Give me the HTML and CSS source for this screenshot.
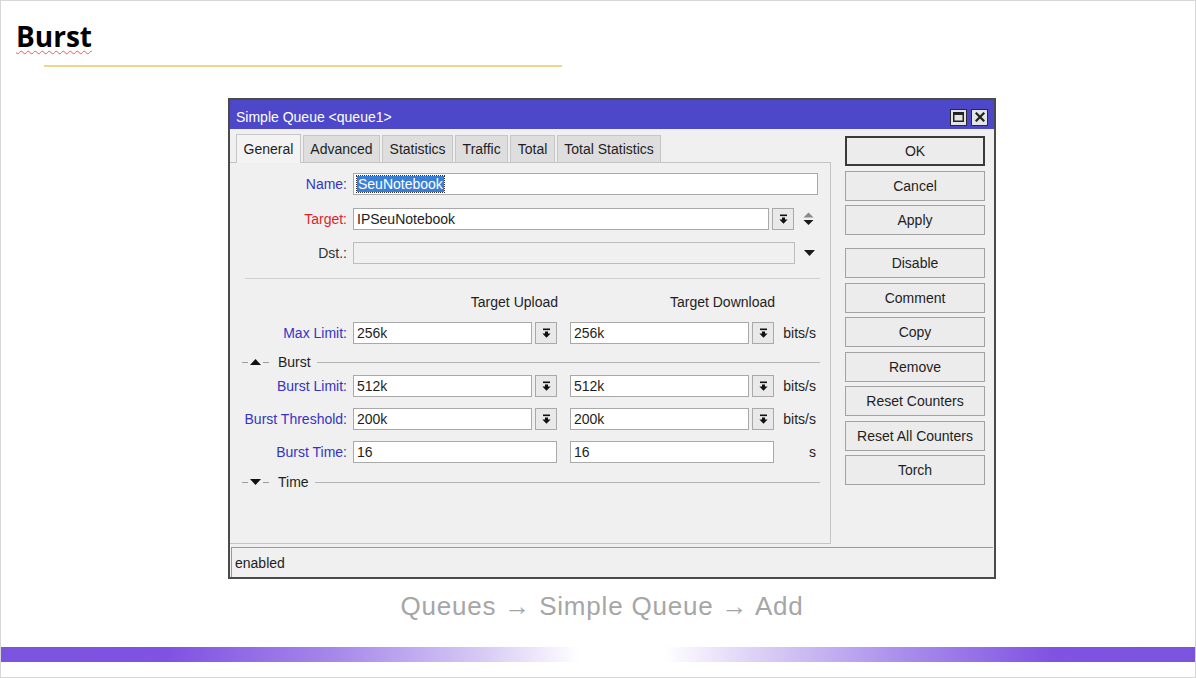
FILE: index.html
```html
<!DOCTYPE html>
<html lang="pt">
<head>
<meta charset="utf-8">
<title>Burst</title>
<link rel="stylesheet" href="styles.css">
</head>
<body>
<div class="slide">
  <h1 class="title"><span class="sq">Burst</span></h1>
  <div class="rule"></div>

  <div class="win">
    <div class="titlebar">
      <span class="wtitle">Simple Queue &lt;queue1&gt;</span>
      <div class="wbtns">
        <span class="wbtn"><svg width="11" height="10" viewBox="0 0 11 10"><rect x="0.75" y="0.75" width="9.5" height="8.5" fill="none" stroke="#222" stroke-width="1.5"/><rect x="0.75" y="0.75" width="9.5" height="2.2" fill="#222"/></svg></span>
        <span class="wbtn"><svg width="10" height="10" viewBox="0 0 10 10"><path d="M1.5 1.5l7 7M8.5 1.5l-7 7" stroke="#222" stroke-width="2.2" stroke-linecap="square"/></svg></span>
      </div>
    </div>

    <div class="wbody">
      <div class="leftcol">
        <div class="tabs">
          <span class="tab active">General</span>
          <span class="tab">Advanced</span>
          <span class="tab">Statistics</span>
          <span class="tab">Traffic</span>
          <span class="tab">Total</span>
          <span class="tab">Total Statistics</span>
        </div>

        <div class="panel">
          <div class="row r-name">
            <span class="lbl blue">Name:</span>
            <span class="inp w-name"><span class="sel">SeuNotebook</span></span>
          </div>
          <div class="row r-target">
            <span class="lbl red">Target:</span>
            <span class="inp w-target">IPSeuNotebook</span>
            <span class="dd"><svg class="ddi" width="9" height="10" viewBox="0 0 9 10"><rect x="1" y="0.5" width="7" height="1.6"/><path d="M3 3.4h3v2h2.6L4.5 9.8 0.4 5.4H3z"/></svg></span>
            <svg class="updown" width="11" height="14" viewBox="0 0 11 14"><path d="M5.5 0.5L10.5 5.5H0.5z" fill="#8a8a8a"/><path d="M0.5 8H10.5L5.5 13z" fill="#1a1a1a"/></svg>
          </div>
          <div class="row r-dst">
            <span class="lbl grey">Dst.:</span>
            <span class="inp w-dst disabled"></span>
            <svg class="tri-dst" width="11" height="6" viewBox="0 0 11 6"><path d="M0 0H11L5.5 6z" fill="#1a1a1a"/></svg>
          </div>

          <div class="sep"></div>

          <div class="hdr">
            <span class="hcell">Target Upload</span>
            <span class="hcell second">Target Download</span>
          </div>

          <div class="row r-max">
            <span class="lbl blue">Max Limit:</span>
            <span class="inp w-lim">256k</span>
            <span class="dd"><svg class="ddi" width="9" height="10" viewBox="0 0 9 10"><rect x="1" y="0.5" width="7" height="1.6"/><path d="M3 3.4h3v2h2.6L4.5 9.8 0.4 5.4H3z"/></svg></span>
            <span class="inp w-lim second">256k</span>
            <span class="dd"><svg class="ddi" width="9" height="10" viewBox="0 0 9 10"><rect x="1" y="0.5" width="7" height="1.6"/><path d="M3 3.4h3v2h2.6L4.5 9.8 0.4 5.4H3z"/></svg></span>
            <span class="unit">bits/s</span>
          </div>

          <div class="grp g-burst">
            <span class="dash"></span>
            <svg class="gtri" width="11" height="6" viewBox="0 0 11 6"><path d="M5.5 0L11 6H0z" fill="#111"/></svg>
            <span class="dash"></span>
            <span class="gtext">Burst</span>
            <span class="gline"></span>
          </div>

          <div class="row r-blim">
            <span class="lbl blue">Burst Limit:</span>
            <span class="inp w-lim">512k</span>
            <span class="dd"><svg class="ddi" width="9" height="10" viewBox="0 0 9 10"><rect x="1" y="0.5" width="7" height="1.6"/><path d="M3 3.4h3v2h2.6L4.5 9.8 0.4 5.4H3z"/></svg></span>
            <span class="inp w-lim second">512k</span>
            <span class="dd"><svg class="ddi" width="9" height="10" viewBox="0 0 9 10"><rect x="1" y="0.5" width="7" height="1.6"/><path d="M3 3.4h3v2h2.6L4.5 9.8 0.4 5.4H3z"/></svg></span>
            <span class="unit">bits/s</span>
          </div>

          <div class="row r-bthr">
            <span class="lbl blue">Burst Threshold:</span>
            <span class="inp w-lim">200k</span>
            <span class="dd"><svg class="ddi" width="9" height="10" viewBox="0 0 9 10"><rect x="1" y="0.5" width="7" height="1.6"/><path d="M3 3.4h3v2h2.6L4.5 9.8 0.4 5.4H3z"/></svg></span>
            <span class="inp w-lim second">200k</span>
            <span class="dd"><svg class="ddi" width="9" height="10" viewBox="0 0 9 10"><rect x="1" y="0.5" width="7" height="1.6"/><path d="M3 3.4h3v2h2.6L4.5 9.8 0.4 5.4H3z"/></svg></span>
            <span class="unit">bits/s</span>
          </div>

          <div class="row r-btime">
            <span class="lbl blue">Burst Time:</span>
            <span class="inp w-time">16</span>
            <span class="inp w-time second">16</span>
            <span class="unit">s</span>
          </div>

          <div class="grp g-time">
            <span class="dash"></span>
            <svg class="gtri" width="11" height="6" viewBox="0 0 11 6"><path d="M0 0H11L5.5 6z" fill="#111"/></svg>
            <span class="dash"></span>
            <span class="gtext">Time</span>
            <span class="gline"></span>
          </div>
        </div>
      </div>

      <div class="btncol">
        <button class="btn default">OK</button>
        <button class="btn">Cancel</button>
        <button class="btn">Apply</button>
        <button class="btn b-gap">Disable</button>
        <button class="btn">Comment</button>
        <button class="btn">Copy</button>
        <button class="btn">Remove</button>
        <button class="btn">Reset Counters</button>
        <button class="btn">Reset All Counters</button>
        <button class="btn">Torch</button>
      </div>
    </div>

    <div class="status">enabled</div>
  </div>

  <p class="caption">Queues → Simple Queue → Add</p>
  <div class="band"></div>
</div>
</body>
</html>
```

FILE: styles.css
```css
html, body {
  margin: 0;
  padding: 0;
  background: #fff;
}

.slide {
  width: 1196px;
  height: 678px;
  box-sizing: border-box;
  border: 1px solid #d6d6d6;
  display: flex;
  flex-direction: column;
  overflow: hidden;
  background: #fff;
}

.title {
  margin: 0;
  padding: 18px 0 0 15px;
  font: 700 28px/34px "Open Sans", "Liberation Sans", sans-serif;
  color: #000;
}

.sq {
  text-decoration: underline wavy #e06060;
  text-decoration-thickness: 1px;
  text-underline-offset: 3px;
}

.rule {
  margin: 12px 0 0 43px;
  width: 518px;
  height: 2px;
  background: #ecd78f;
}

/* ---------- window ---------- */
.win {
  margin: 31px 0 0 227px;
  width: 768px;
  height: 481px;
  box-sizing: border-box;
  border: 2px solid #4a4a4a;
  background: #f0f0f0;
  display: flex;
  flex-direction: column;
  font: 14px "Liberation Sans", Arial, sans-serif;
  color: #1e1e1e;
}

.titlebar {
  height: 29px;
  box-sizing: border-box;
  padding: 5px 6px 0;
  flex: none;
  background: #4c48c9;
  display: flex;
  align-items: center;
  color: #fff;
}

.wtitle { flex: 1; }

.wbtns {
  display: flex;
  gap: 4px;
}

.wbtn {
  width: 17px;
  height: 17px;
  box-sizing: border-box;
  border: 1px solid #2a2a2a;
  background: #e4e4e4;
  display: flex;
  align-items: center;
  justify-content: center;
}

.wbody {
  display: flex;
  height: 415px;
  flex: none;
}

.leftcol {
  width: 601px;
  display: flex;
  flex-direction: column;
}

/* tabs */
.tabs {
  margin-top: 5px;
  height: 29px;
  padding-left: 6px;
  display: flex;
  align-items: flex-end;
  gap: 2px;
  box-shadow: inset 0 -1px 0 #c4c4c4;
}

.tab {
  height: 27px;
  margin-bottom: 1px;
  box-sizing: border-box;
  padding: 0 6.5px;
  border: 1px solid #c6c6c6;
  border-bottom: none;
  background: #dedede;
  display: flex;
  align-items: center;
}

.tab.active {
  height: 29px;
  margin-bottom: 0;
  background: #f3f3f3;
}

.panel {
  flex: 1;
  border-right: 1px solid #c4c4c4;
  border-bottom: 1px solid #c4c4c4;
}

/* form rows */
.row {
  display: flex;
  align-items: center;
  height: 22px;
}

.r-name { margin-top: 10px; }
.r-target { margin-top: 13px; }
.r-dst { margin-top: 12px; }
.r-max { margin-top: 12px; }
.r-blim { margin-top: 6px; }
.r-bthr { margin-top: 11px; }
.r-btime { margin-top: 11px; }

.lbl {
  width: 117px;
  margin-right: 6px;
  flex: none;
  text-align: right;
  white-space: nowrap;
}

.blue { color: #3434c4; }
.red { color: #e01f2b; }
.grey { color: #333; }

.inp {
  height: 22px;
  box-sizing: border-box;
  border: 1px solid #a9a9a9;
  background: #fff;
  padding-left: 3px;
  display: flex;
  align-items: center;
  flex: none;
  white-space: nowrap;
}

.inp.disabled {
  background: #f0f0f0;
  border-color: #bdbdbd;
}

.w-name { width: 465px; }
.w-target { width: 416px; }
.w-dst { width: 442px; }
.w-lim { width: 179px; }
.w-time { width: 204px; }

.second { margin-left: 13px; }

.sel {
  background: #3a7fd6;
  color: #fff;
  padding: 0 1px;
  outline: 1px dotted #333;
}

.dd {
  width: 22px;
  height: 22px;
  margin-left: 3px;
  box-sizing: border-box;
  border: 1px solid #a9a9a9;
  background: #e9e9e9;
  display: flex;
  align-items: center;
  justify-content: center;
  flex: none;
}

.ddi { fill: #111; }

.updown { margin-left: 9px; flex: none; }
.tri-dst { margin-left: 9px; flex: none; }

.unit {
  width: 38px;
  margin-left: 4px;
  text-align: right;
  flex: none;
}

.sep {
  margin: 14px 10px 0 15px;
  height: 1px;
  background: #d0d0d0;
}

.hdr {
  display: flex;
  height: 16px;
  margin-top: 15px;
  padding-left: 123px;
  align-items: center;
}

.hcell {
  width: 205px;
  text-align: right;
  white-space: nowrap;
}

.hdr .second { margin-left: 12px; }

/* group headers */
.grp {
  display: flex;
  align-items: center;
  height: 14px;
  margin: 0 10px 0 12px;
}

.g-burst { margin-top: 11px; }
.g-time { margin-top: 12px; }

.dash {
  width: 6px;
  height: 1px;
  background: #9c9c9c;
  flex: none;
}

.gtri { margin: 0 2px; flex: none; }

.gtext { margin-left: 9px; }

.gline {
  flex: 1;
  height: 1px;
  margin-left: 6px;
  background: #b4b4b4;
}

/* buttons column */
.btncol {
  margin-left: 14px;
  width: 140px;
  padding-top: 7px;
  display: flex;
  flex-direction: column;
  gap: 4.5px;
}

.btn {
  height: 30px;
  flex: none;
  box-sizing: border-box;
  border: 1px solid #a2a2a2;
  background: #ececec;
  font: inherit;
  color: #1e1e1e;
  padding: 0;
  margin: 0;
}

.btn.default { border: 2px solid #3a3a3a; }
.btn.b-gap { margin-top: 8.5px; }

.status {
  margin: 3px 1px 0 1px;
  height: 30px;
  box-sizing: border-box;
  border-top: 1px solid #9a9a9a;
  border-left: 1px solid #9a9a9a;
  padding-left: 3px;
  display: flex;
  align-items: center;
}

/* caption and band */
.caption {
  margin: 12px 0 0;
  padding-left: 8px;
  text-align: center;
  font: 26px/30px "Liberation Sans", Arial, sans-serif;
  letter-spacing: 0.8px;
  color: #a6a6a6;
}

.band {
  margin-top: 26px;
  height: 15px;
  flex: none;
  background: linear-gradient(to right,
    #7a54de 0%,
    #8052e2 14%,
    #a688ea 28%,
    #d5c8f4 40%,
    #ffffff 48.5%,
    #ffffff 55.5%,
    #ddd2f6 63%,
    #ab90ec 75%,
    #8052e2 88%,
    #7a54de 100%);
}
```
